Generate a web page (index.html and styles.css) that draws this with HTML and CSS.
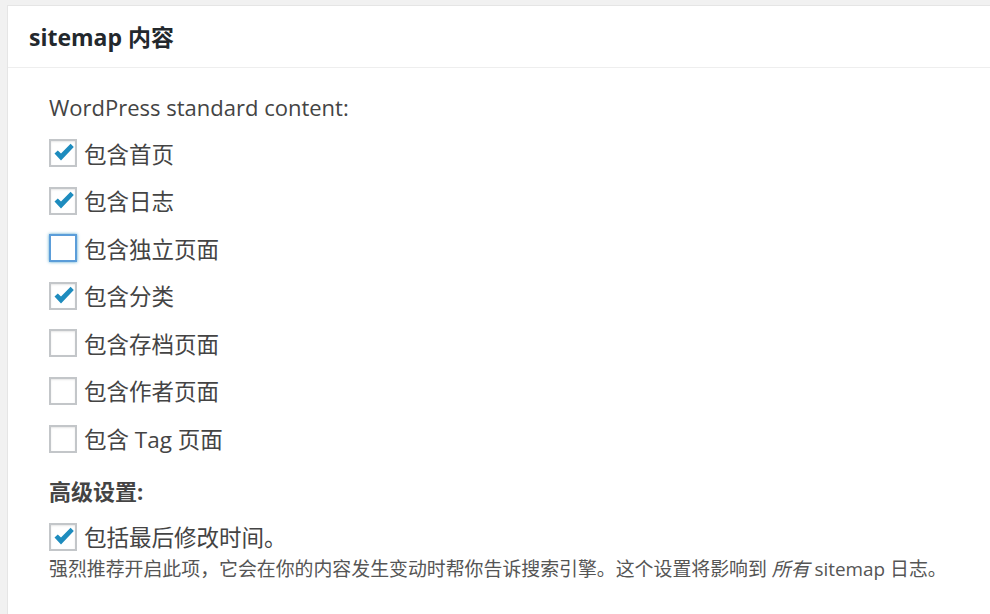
FILE: index.html
```html
<!DOCTYPE html>
<html>
<head>
  <meta charset="UTF-8">
  <title>sitemap 内容</title>
  <link rel="stylesheet" href="styles.css">
</head>
<body>
  <div class="postbox">
    <h2 class="hndle">sitemap 内容</h2>
    <div class="inside">
      <p class="group-title">WordPress standard content:</p>
      <ul class="options">
        <li><label><span class="cb checked"><svg viewBox="0 0 24 24"><path d="M3.5 12.5 L6.8 9.4 L10 12.6 L19.6 2.8 L22.8 6 L10 19.6 Z"/></svg></span>包含首页</label></li>
        <li><label><span class="cb checked"><svg viewBox="0 0 24 24"><path d="M3.5 12.5 L6.8 9.4 L10 12.6 L19.6 2.8 L22.8 6 L10 19.6 Z"/></svg></span>包含日志</label></li>
        <li><label><span class="cb focus"></span>包含独立页面</label></li>
        <li><label><span class="cb checked"><svg viewBox="0 0 24 24"><path d="M3.5 12.5 L6.8 9.4 L10 12.6 L19.6 2.8 L22.8 6 L10 19.6 Z"/></svg></span>包含分类</label></li>
        <li><label><span class="cb"></span>包含存档页面</label></li>
        <li><label><span class="cb"></span>包含作者页面</label></li>
        <li><label><span class="cb"></span>包含 Tag 页面</label></li>
      </ul>
      <p class="group-title strong">高级设置:</p>
      <ul class="options">
        <li><label><span class="cb checked"><svg viewBox="0 0 24 24"><path d="M3.5 12.5 L6.8 9.4 L10 12.6 L19.6 2.8 L22.8 6 L10 19.6 Z"/></svg></span>包括最后修改时间。</label></li>
      </ul>
      <p class="description">强烈推荐开启此项，它会在你的内容发生变动时帮你告诉搜索引擎。这个设置将影响到 <em>所有</em> sitemap 日志。</p>
    </div>
  </div>
</body>
</html>
```

FILE: styles.css
```css
body {
  margin: 0;
  padding: 5px 0 0 7px;
  background: #f1f1f1;
  font-family: "Open Sans", "Noto Sans CJK SC", sans-serif;
  color: #444;
  overflow: hidden;
}
.postbox {
  box-sizing: border-box;
  height: calc(100vh - 5px);
  background: #fff;
  border: 1px solid #e5e5e5;
  border-right: none;
  border-bottom: none;
}
.hndle {
  margin: 0;
  padding: 0 21px;
  height: 61px;
  line-height: 62px;
  font-size: 23px;
  font-weight: bold;
  color: #23282d;
  border-bottom: 1px solid #eee;
}
.inside { padding: 23px 41px 0; }
.group-title {
  margin: 0 0 16px;
  font-size: 22px;
  line-height: 32px;
}
.group-title.strong { font-weight: bold; margin-top: 22px; }
.options {
  list-style: none;
  margin: 0;
  padding: 0;
  display: flex;
  flex-direction: column;
  gap: 19.6px;
}
.options label {
  display: flex;
  align-items: center;
  gap: 7px;
  height: 28px;
  font-size: 22.5px;
}
.cb {
  box-sizing: border-box;
  width: 28px;
  height: 28px;
  border: 2px solid #c3c6c9;
  background: #fff;
  box-shadow: inset 0 1px 2px rgba(0,0,0,.1);
}
.cb svg { display: block; width: 24px; height: 24px; fill: #1e8cbe; }
.cb.focus {
  border-color: #5b9dd9;
  box-shadow: 0 0 3px rgba(30,140,190,.8);
}
.description {
  margin: 4px 0 0;
  font-size: 18.9px;
  line-height: 28px;
  color: #555;
}
.description em { font-style: italic; }
```
